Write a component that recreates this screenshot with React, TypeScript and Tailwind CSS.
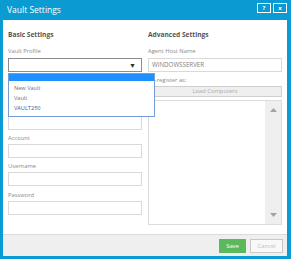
import React from "react";

function Field({ label, className = "" }: { label: string; className?: string }) {
  return (
    <div className={className}>
      <div className="h-[10px] leading-[10px] text-[5.8px] text-[#8a8a8a]">{label}</div>
      <div className="mt-[1px] h-[14px] border border-[#d9d9d9] bg-white" />
    </div>
  );
}

export default function App() {
  return (
    <div className="w-[291px] h-[259px] bg-[#0b9bd3] flex flex-col font-['Open_Sans',sans-serif] overflow-hidden">
      {/* title bar */}
      <div className="h-[20px] flex justify-between pl-[7px] pr-[4px]">
        <span className="text-white text-[8.5px] leading-[20px]">Vault Settings</span>
        <div className="flex gap-[2px] mt-[3px]">
          <div className="w-[14px] h-[10px] border border-white flex items-center justify-center text-white text-[6px] font-bold leading-none">?</div>
          <div className="w-[14px] h-[10px] border border-white flex items-center justify-center text-white text-[6px] font-bold leading-none">x</div>
        </div>
      </div>

      <div className="ml-[3px] mr-[4px] mb-[3px] flex-1 bg-white flex flex-col">
        <div className="flex-1 flex gap-[6px] px-[5px] pt-[9px]">
          {/* Basic settings */}
          <div className="w-[134px]">
            <div className="h-[12px] leading-[12px] text-[6.6px] font-bold text-[#555]">Basic Settings</div>
            <div className="mt-[5px] h-[10px] leading-[10px] text-[5.8px] text-[#8a8a8a]">Vault Profile</div>
            <div className="relative mt-[2px] h-[14px] border border-[#8c8c8c] bg-white">
              <span className="absolute right-[5px] top-[1px] text-[7px] leading-[12px] text-[#333]">▼</span>
              <div className="absolute left-[-1px] top-[14px] z-10 w-[147px] h-[44px] border border-[#739cd8] bg-white">
                <div className="h-[7px] bg-[#1e90ff]" />
                <div className="mt-[2px] px-[5px] text-[5.6px] leading-[10px] text-[#6a6f80]">
                  <div>New Vault</div>
                  <div>Vault</div>
                  <div className="text-[#3b5a96]">VAULT250</div>
                </div>
              </div>
            </div>
            <div className="mt-[33px]">
              <div className="h-[10px]" />
              <div className="mt-[1px] h-[14px] border border-[#d9d9d9]" />
            </div>
            <Field label="Account" className="mt-[3px]" />
            <Field label="Username" className="mt-[3px]" />
            <Field label="Password" className="mt-[4px]" />
          </div>

          {/* Advanced settings */}
          <div className="w-[134px]">
            <div className="h-[12px] leading-[12px] text-[6.6px] font-bold text-[#555]">Advanced Settings</div>
            <div className="mt-[5px] h-[10px] leading-[10px] text-[5.8px] text-[#8a8a8a]">Agent Host Name</div>
            <div className="mt-[2px] h-[14px] border border-[#d9d9d9] px-[3px] text-[6.2px] leading-[12px] text-[#808080]">WINDOWSSERVER</div>
            <div className="mt-[3px] h-[10px] leading-[10px] text-[5.8px] text-[#8a8a8a]">Re-register as:</div>
            <div className="mt-[1px] h-[11px] border border-[#cfcfcf] bg-[#efefef] text-center text-[5.8px] leading-[9px] text-[#aaa]">Load Computers</div>
            <div className="mt-[3px] h-[125px] border border-[#dcdcdc] flex justify-end">
              <div className="w-[16px] bg-[#efefef] flex flex-col items-center justify-between py-[7px]">
                <svg width="7" height="4" viewBox="0 0 7 4"><path d="M0 4 L3.5 0 L7 4 Z" fill="#a3a3a3" /></svg>
                <svg width="7" height="4" viewBox="0 0 7 4"><path d="M0 0 L3.5 4 L7 0 Z" fill="#a3a3a3" /></svg>
              </div>
            </div>
          </div>
        </div>

        {/* footer */}
        <div className="h-[22px] border-t border-[#dcdcdc] bg-[#efefef] flex justify-end items-center gap-[4px] pr-[4px]">
          <div className="w-[27px] h-[14px] bg-[#5cb85c] text-white text-[5.8px] leading-[14px] text-center">Save</div>
          <div className="w-[33px] h-[14px] border border-[#c8c8c8] bg-[#f8f8f8] text-[#bdbdbd] text-[5.8px] leading-[12px] text-center">Cancel</div>
        </div>
      </div>
    </div>
  );
}
